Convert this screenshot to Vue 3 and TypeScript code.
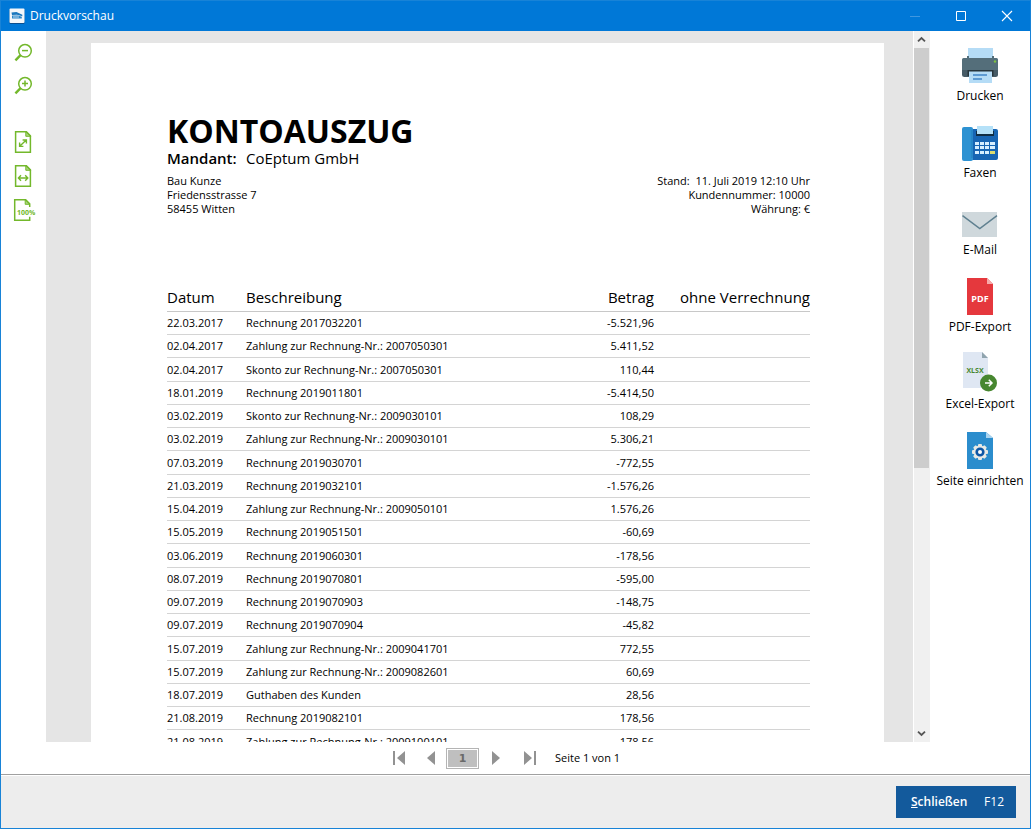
<script setup lang="ts">
import { ref } from 'vue'

interface Booking {
  date: string
  text: string
  amount: string
}

const pageNumber = ref('1')

const bookings: Booking[] = [
  { date: '22.03.2017', text: 'Rechnung 2017032201', amount: '-5.521,96' },
  { date: '02.04.2017', text: 'Zahlung zur Rechnung-Nr.: 2007050301', amount: '5.411,52' },
  { date: '02.04.2017', text: 'Skonto zur Rechnung-Nr.: 2007050301', amount: '110,44' },
  { date: '18.01.2019', text: 'Rechnung 2019011801', amount: '-5.414,50' },
  { date: '03.02.2019', text: 'Skonto zur Rechnung-Nr.: 2009030101', amount: '108,29' },
  { date: '03.02.2019', text: 'Zahlung zur Rechnung-Nr.: 2009030101', amount: '5.306,21' },
  { date: '07.03.2019', text: 'Rechnung 2019030701', amount: '-772,55' },
  { date: '21.03.2019', text: 'Rechnung 2019032101', amount: '-1.576,26' },
  { date: '15.04.2019', text: 'Zahlung zur Rechnung-Nr.: 2009050101', amount: '1.576,26' },
  { date: '15.05.2019', text: 'Rechnung 2019051501', amount: '-60,69' },
  { date: '03.06.2019', text: 'Rechnung 2019060301', amount: '-178,56' },
  { date: '08.07.2019', text: 'Rechnung 2019070801', amount: '-595,00' },
  { date: '09.07.2019', text: 'Rechnung 2019070903', amount: '-148,75' },
  { date: '09.07.2019', text: 'Rechnung 2019070904', amount: '-45,82' },
  { date: '15.07.2019', text: 'Zahlung zur Rechnung-Nr.: 2009041701', amount: '772,55' },
  { date: '15.07.2019', text: 'Zahlung zur Rechnung-Nr.: 2009082601', amount: '60,69' },
  { date: '18.07.2019', text: 'Guthaben des Kunden', amount: '28,56' },
  { date: '21.08.2019', text: 'Rechnung 2019082101', amount: '178,56' },
  { date: '21.08.2019', text: 'Zahlung zur Rechnung-Nr.: 2009100101', amount: '178,56' },
]
</script>

<template>
  <div class="window">
    <header class="titlebar">
      <svg class="app-icon" width="16" height="16" viewBox="0 0 16 16">
        <rect x="0.5" y="1" width="15" height="15" rx="1" fill="#0b4f8f" />
        <rect x="0.5" y="0.5" width="15" height="14.5" rx="1" fill="#f4f7fa" />
        <path d="M2.500 4.400l5-.4 5.800 2.800v1.400L8 6.800 3 7z" fill="#1b78be" />
        <path d="M3 7.600h6l3.800 1.200v1.600H3z" fill="#2a86c8" />
        <path d="M4 9h6" stroke="#b8d8ee" />
      </svg>
      <h1 class="title">Druckvorschau</h1>
      <button class="caption" type="button" aria-label="Minimieren" disabled>
        <svg width="12" height="12" viewBox="0 0 12 12"><path d="M1 6.5h10" stroke="#3f97e0" /></svg>
      </button>
      <button class="caption" type="button" aria-label="Maximieren">
        <svg width="12" height="12" viewBox="0 0 12 12"><path d="M1.5 1.5h9v9h-9z" fill="none" stroke="#fff" /></svg>
      </button>
      <button class="caption" type="button" aria-label="Fenster schließen">
        <svg width="12" height="12" viewBox="0 0 12 12"><path d="M1 1l10 10M11 1L1 11" stroke="#fff" stroke-width="1.1" /></svg>
      </button>
    </header>

    <main class="main">
      <nav class="tools" aria-label="Ansicht">
        <div class="tool-group">
          <button class="tool" type="button" aria-label="Verkleinern">
            <svg width="24" height="24" viewBox="0 0 24 24" fill="none" stroke="#73b82b">
              <circle cx="13" cy="10.8" r="6.3" stroke-width="1.5" />
              <path d="M10 10.6h6" stroke-width="1.5" />
              <path d="M8.6 15.2L3.4 20.4" stroke-width="2.400" />
            </svg>
          </button>
          <button class="tool" type="button" aria-label="Vergrößern">
            <svg width="24" height="24" viewBox="0 0 24 24" fill="none" stroke="#73b82b">
              <circle cx="13" cy="9.8" r="6.3" stroke-width="1.5" />
              <path d="M10 9.6h6M13 6.6v6" stroke-width="1.5" />
              <path d="M8.6 14.2L3.4 19.4" stroke-width="2.400" />
            </svg>
          </button>
        </div>
        <div class="tool-group">
          <button class="tool" type="button" aria-label="Ganze Seite">
            <svg width="24" height="24" viewBox="0 0 24 24" fill="none" stroke="#73b82b">
              <path d="M3.6 1.7h10.8l4 4v16.6H3.6z" stroke-width="1.5" />
              <path d="M13.8 1.5v4.8h4.8z" fill="#73b82b" fill-opacity="0.6" stroke-width="1" />
              <path d="M8.2 15.8l5.8-5.6M10.6 10h3.8v3.6M7.6 12.6v3.8h3.8" stroke-width="1.400" />
            </svg>
          </button>
          <button class="tool" type="button" aria-label="Seitenbreite">
            <svg width="24" height="24" viewBox="0 0 24 24" fill="none" stroke="#73b82b">
              <path d="M3.6 1.7h10.8l4 4v16.6H3.6z" stroke-width="1.5" />
              <path d="M13.8 1.5v4.8h4.8z" fill="#73b82b" fill-opacity="0.6" stroke-width="1" />
              <path d="M6.6 14h9M9 11.3L6.4 14 9 16.7M13.2 11.3l2.6 2.7-2.6 2.7" stroke-width="1.400" />
            </svg>
          </button>
          <button class="tool" type="button" aria-label="Originalgröße">
            <svg width="24" height="24" viewBox="0 0 24 24" fill="none" stroke="#73b82b">
              <path d="M17.7 9V5.7l-4-4H2.7v20.6h15v-3.5" stroke-width="1.5" />
              <path d="M13.2 1.5v4.8H18z" fill="#73b82b" fill-opacity="0.6" stroke-width="1" />
              <text x="5" y="17" class="percent">100%</text>
            </svg>
          </button>
        </div>
      </nav>

      <section class="center">
        <div class="viewer">
          <div class="canvas">
            <article class="sheet">
              <h2 class="doc-title">KONTOAUSZUG</h2>
              <p class="client"><strong>Mandant:</strong><span>CoEptum GmbH</span></p>
              <div class="meta">
                <address class="address">Bau Kunze<br />Friedensstrasse 7<br />58455 Witten</address>
                <p class="facts">Stand:&nbsp; 11. Juli 2019 12:10 Uhr<br />Kundennummer: 10000<br />Währung: €</p>
              </div>
              <table class="ledger">
                <colgroup>
                  <col class="col-date" />
                  <col />
                  <col class="col-amount" />
                  <col class="col-open" />
                </colgroup>
                <thead>
                  <tr>
                    <th scope="col">Datum</th>
                    <th scope="col">Beschreibung</th>
                    <th scope="col" class="num">Betrag</th>
                    <th scope="col" class="num">ohne Verrechnung</th>
                  </tr>
                </thead>
                <tbody>
                  <tr v-for="(b, i) in bookings" :key="i">
                    <td>{{ b.date }}</td>
                    <td>{{ b.text }}</td>
                    <td class="num">{{ b.amount }}</td>
                    <td></td>
                  </tr>
                </tbody>
              </table>
            </article>
          </div>
          <div class="scrollbar">
            <button class="scroll-arrow" type="button" aria-label="Nach oben">
              <svg width="9" height="7" viewBox="0 0 9 7"><path d="M1 5.4L4.5 2 8 5.4" fill="none" stroke="#555" stroke-width="1.8" /></svg>
            </button>
            <div class="track"><div class="thumb"></div></div>
            <button class="scroll-arrow" type="button" aria-label="Nach unten">
              <svg width="9" height="7" viewBox="0 0 9 7"><path d="M1 1.6L4.5 5 8 1.6" fill="none" stroke="#555" stroke-width="1.8" /></svg>
            </button>
          </div>
        </div>

        <nav class="pager" aria-label="Seiten">
          <button class="page-step" type="button" aria-label="Erste Seite">
            <svg width="14" height="16" viewBox="0 0 14 16" fill="#929292"><path d="M1 1h2v14H1zM13 1v14L5 8z" /></svg>
          </button>
          <button class="page-step" type="button" aria-label="Vorherige Seite">
            <svg width="14" height="16" viewBox="0 0 14 16" fill="#929292"><path d="M11 1v14L3 8z" /></svg>
          </button>
          <input v-model="pageNumber" class="page-field" type="text" aria-label="Seitennummer" />
          <button class="page-step" type="button" aria-label="Nächste Seite">
            <svg width="14" height="16" viewBox="0 0 14 16" fill="#929292"><path d="M3 1v14l8-7z" /></svg>
          </button>
          <button class="page-step" type="button" aria-label="Letzte Seite">
            <svg width="14" height="16" viewBox="0 0 14 16" fill="#929292"><path d="M1 1v14l8-7zM11 1h2v14h-2z" /></svg>
          </button>
          <span class="page-count">Seite 1 von 1</span>
        </nav>
      </section>

      <aside class="actions">
        <button class="action" type="button">
          <svg width="40" height="40" viewBox="0 0 40 40">
            <path d="M8 4h25v12H8z" fill="#b5dcf6" />
            <path d="M3.5 14H7v-2h2v2h23v-2h2v2h2.5a1.5 1.5 0 0 1 1.5 1.5V26H2V15.5A1.5 1.5 0 0 1 3.5 14z" fill="#546e7a" />
            <path d="M2 26h36v4.500a2.500 2.500 0 0 1-2.500 2.500h-31A2.500 2.500 0 0 1 2 30.500z" fill="#465a65" />
            <path d="M7.5 26h26v6h-26z" fill="#26343b" />
            <path d="M9 27.5h23V39H9z" fill="#b5dcf6" />
            <path d="M13 31h14M13 35h9" stroke="#4285c8" stroke-width="1.4" />
            <circle cx="35" cy="17.5" r="1.2" fill="#7fc242" />
          </svg>
          <span>Drucken</span>
        </button>
        <button class="action" type="button">
          <svg width="40" height="40" viewBox="0 0 40 40">
            <rect x="11" y="8" width="27" height="31" rx="2" fill="#1765b3" />
            <rect x="2" y="6" width="11" height="34" rx="2" fill="#2d92d2" />
            <path d="M12 9v28" stroke="#237dbd" />
            <path d="M16 10h18v5H16z" fill="#102d43" />
            <path d="M17 5h16v8H17z" fill="#b5e1f8" />
            <path d="M15 21h4v3h-4zM20 21h4v3h-4zM25 21h4v3h-4zM30 21h5v3h-5zM15 25h4v3h-4zM20 25h4v3h-4zM25 25h4v3h-4zM30 25h5v3h-5zM15 30h4v3h-4zM20 30h4v3h-4zM25 30h4v3h-4z" fill="#d7efff" />
            <path d="M30 30h5v3h-5z" fill="#dcdc70" />
          </svg>
          <span>Faxen</span>
        </button>
        <button class="action" type="button">
          <svg width="40" height="40" viewBox="0 0 40 40">
            <path d="M2 14h35v25H2z" fill="#cfd8dc" />
            <path d="M2.5 17.7L19.8 30.5 37 17.7" fill="none" stroke="#5f8090" stroke-width="1.5" />
          </svg>
          <span>E-Mail</span>
        </button>
        <button class="action" type="button">
          <svg width="40" height="40" viewBox="0 0 40 40">
            <path d="M7 3h20l6 6v31H7z" fill="#e5383d" />
            <path d="M27 3l6 6h-6z" fill="#f6aaaa" />
            <text x="20" y="27" text-anchor="middle" class="pdf-mark">PDF</text>
          </svg>
          <span>PDF-Export</span>
        </button>
        <button class="action" type="button">
          <svg width="40" height="40" viewBox="0 0 40 40">
            <path d="M3 0h19l6 6v30H3z" fill="#dfe7f3" />
            <path d="M22 0l6 6h-6z" fill="#90a4ae" />
            <text x="15" y="21" text-anchor="middle" class="xlsx-mark">XLSX</text>
            <circle cx="28.5" cy="31" r="8.5" fill="#478730" />
            <path d="M25 31h6.5M28.8 27.8L32 31l-3.2 3.2" fill="none" stroke="#fff" stroke-width="1.5" />
          </svg>
          <span>Excel-Export</span>
        </button>
        <button class="action" type="button">
          <svg width="40" height="40" viewBox="0 0 40 40">
            <path d="M7 3h19l7 6v31H7z" fill="#2b8dcd" />
            <path d="M26 3l7 6h-7z" fill="#a9d4f0" />
            <g fill="#e8e9e5">
              <circle cx="20" cy="23" r="6.5" />
              <rect x="18" y="15" width="4" height="16" rx="1" />
              <rect x="18" y="15" width="4" height="16" rx="1" transform="rotate(45 20 23)" />
              <rect x="18" y="15" width="4" height="16" rx="1" transform="rotate(90 20 23)" />
              <rect x="18" y="15" width="4" height="16" rx="1" transform="rotate(135 20 23)" />
            </g>
            <circle cx="20" cy="23" r="3.3" fill="#fff" stroke="#0d56a5" stroke-width="2.6" />
          </svg>
          <span>Seite einrichten</span>
        </button>
      </aside>
    </main>

    <footer class="footer">
      <button class="close" type="button">
        <span class="close-label"><u>S</u>chließen</span>
        <kbd class="shortcut">F12</kbd>
      </button>
    </footer>
  </div>
</template>

<style>
body {
  margin: 0;
}
</style>

<style scoped>
.window {
  box-sizing: border-box;
  display: flex;
  flex-direction: column;
  height: 100vh;
  border: 1px solid #1883d7;
  background: #fff;
  color: #000;
  font-family: 'Open Sans', 'Noto Sans', sans-serif;
  font-size: 12px;
  line-height: 16px;
  overflow: hidden;
}

button {
  margin: 0;
  padding: 0;
  border: 0;
  background: none;
  color: inherit;
  font: inherit;
}

svg {
  display: block;
}

.titlebar {
  display: flex;
  align-items: center;
  flex: none;
  height: 30px;
  padding-left: 8px;
  background: #0078d7;
  color: #fff;
}

.title {
  flex: 1;
  margin: 0 0 0 5px;
  font-size: 12px;
  font-weight: 400;
}

.caption {
  display: flex;
  align-items: center;
  justify-content: center;
  width: 46px;
  height: 30px;
}

.main {
  display: flex;
  flex: 1;
  min-height: 0;
}

.tools {
  display: flex;
  flex-direction: column;
  gap: 32px;
  box-sizing: border-box;
  width: 45px;
  padding: 9px 0 0 11px;
}

.tool-group {
  display: flex;
  flex-direction: column;
  gap: 10px;
}

.tool {
  width: 24px;
  height: 24px;
}

.tool svg {
  overflow: visible;
}

.percent {
  fill: #73b82b;
  stroke: none;
  font-size: 7px;
  font-weight: 700;
}

.center {
  display: flex;
  flex: 1;
  flex-direction: column;
  min-width: 0;
}

.viewer {
  display: flex;
  flex: 1;
  min-height: 0;
}

.canvas {
  flex: 1;
  min-width: 0;
  overflow: hidden;
  padding: 12px 29px 0 45px;
  background: #e5e5e5;
}

.sheet {
  padding: 70px 74px 76px 76px;
  background: #fff;
}

.doc-title {
  margin: 0;
  font-size: 32px;
  font-weight: 700;
  line-height: 36px;
}

.client {
  display: flex;
  margin: 0;
  font-size: 15px;
  line-height: 18px;
}

.client strong {
  width: 79px;
  font-weight: 600;
}

.meta {
  display: flex;
  justify-content: space-between;
  margin-top: 7px;
  font-size: 11px;
  line-height: 14px;
}

.address {
  font-style: normal;
}

.facts {
  margin: 0;
  text-align: right;
}

.ledger {
  width: 100%;
  margin-top: 68px;
  border-collapse: separate;
  border-spacing: 0;
  table-layout: fixed;
  font-size: 11px;
}

.col-date {
  width: 79px;
}

.col-amount {
  width: 150px;
}

.col-open {
  width: 156px;
}

.ledger th {
  height: 25px;
  padding: 0 0 2px;
  border-bottom: 1px solid #c8c8c8;
  font-size: 15px;
  font-weight: 500;
  line-height: 20px;
  text-align: left;
  white-space: nowrap;
}

.ledger td {
  height: 22px;
  padding: 0;
  border-bottom: 1px solid #d4d4d4;
  white-space: nowrap;
}

.ledger tr:nth-child(4n + 3) td {
  height: 23px;
}

.ledger .num {
  text-align: right;
}

.scrollbar {
  display: flex;
  flex-direction: column;
  box-sizing: border-box;
  width: 17px;
  border-left: 1px solid #fff;
  background: #f0f0f0;
}

.scroll-arrow {
  display: flex;
  align-items: center;
  justify-content: center;
  flex: none;
  width: 15px;
  height: 17px;
}

.track {
  flex: 1;
}

.thumb {
  width: 15px;
  height: 62%;
  background: #cdcdcd;
}

.pager {
  display: flex;
  align-items: center;
  flex: none;
  height: 32px;
  padding-left: 346px;
}

.page-step {
  width: 14px;
  height: 16px;
  margin-right: 18px;
}

.page-step:nth-child(2) {
  margin-right: 8px;
}

.page-step:nth-child(4) {
  margin-right: 20px;
}

.page-field {
  box-sizing: border-box;
  width: 33px;
  height: 21px;
  margin: 0 10px 0 0;
  padding: 0;
  border: 1px solid #b4b4b4;
  outline: 1px solid #fff;
  outline-offset: -2px;
  background: #bfbfbf;
  color: #6a6a6a;
  font: 700 11px/16px 'DejaVu Sans', sans-serif;
  text-align: center;
}

.page-count {
  font-size: 11px;
}

.actions {
  display: flex;
  flex-direction: column;
  gap: 17px;
  width: 100px;
  padding-top: 13px;
}

.action {
  display: flex;
  flex-direction: column;
  align-items: center;
  gap: 4px;
  height: 60px;
  white-space: nowrap;
}

.pdf-mark {
  fill: #fff;
  font-size: 9px;
  font-weight: 700;
}

.xlsx-mark {
  fill: #478730;
  font-size: 7px;
  font-weight: 700;
}

.footer {
  display: flex;
  align-items: center;
  justify-content: flex-end;
  flex: none;
  height: 52px;
  padding: 1px 14px 0 0;
  border-top: 1px solid #a0a0a0;
  background: #ededed;
  box-shadow: inset 0 1px #fff;
}

.close {
  display: flex;
  align-items: center;
  justify-content: space-between;
  width: 120px;
  height: 32px;
  padding: 0 12px 0 15px;
  background: #135a9c;
  color: #fff;
}

.close-label {
  font-weight: 600;
}

.shortcut {
  font: inherit;
}
</style>
